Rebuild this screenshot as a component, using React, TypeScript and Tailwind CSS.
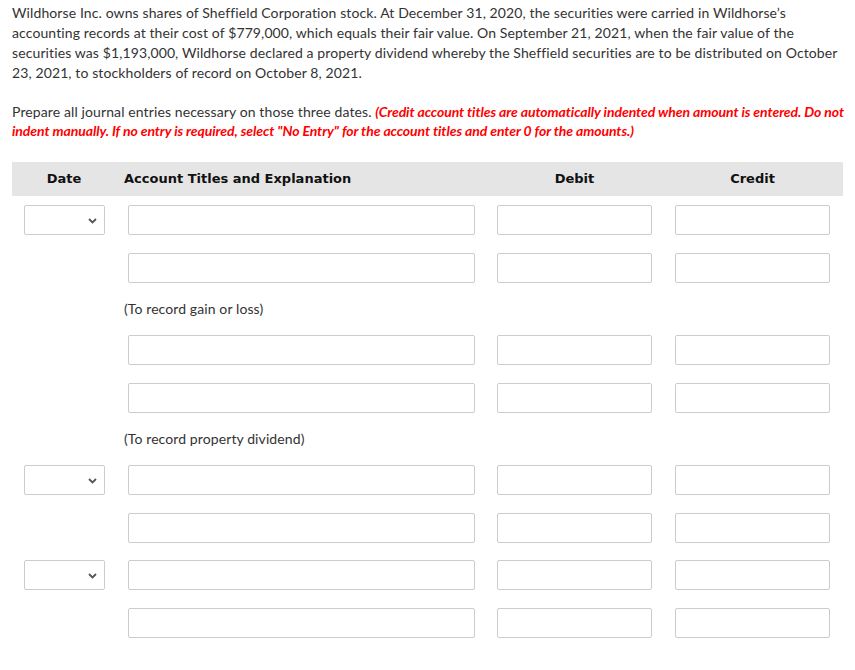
import React from 'react';

const body = "font-['Lato','Liberation_Sans',sans-serif]";
const head = "font-['DejaVu_Sans','Liberation_Sans',sans-serif]";

function Chevron() {
  return (
    <svg width="9" height="6" viewBox="0 0 9 6" className="absolute right-[7px] top-[12px]">
      <path d="M1 1 L4.5 4.5 L8 1" fill="none" stroke="#555" strokeWidth="1.8" />
    </svg>
  );
}

function Box({ className }: { className: string }) {
  return <div className={`h-[30px] border border-[#cccccc] rounded-[2px] bg-white ${className}`} />;
}

function Row({ date, gap = 'mt-[18px]' }: { date?: boolean; gap?: string }) {
  return (
    <div className={`flex ${gap}`}>
      <div className="w-[128px] pl-[24px]">
        {date && (
          <div className="relative w-[81px] h-[30px] border border-[#cccccc] rounded-[2px] bg-white">
            <Chevron />
          </div>
        )}
      </div>
      <Box className="w-[347px]" />
      <Box className="w-[155px] ml-[22px]" />
      <Box className="w-[155px] ml-[23px]" />
    </div>
  );
}

function Note({ text }: { text: string }) {
  return (
    <div className={`${body} text-[14px] leading-[20px] tracking-[0.1px] text-[#333333] pl-[124px] my-[16px]`}>{text}</div>
  );
}

export default function App() {
  return (
    <div className="w-[855px] h-[670px] bg-white overflow-hidden">
      <div className={`${body} text-[14px] leading-[20px] tracking-[0.11px] text-[#333333] pl-[12px] pt-[3px] whitespace-nowrap`}>
        <p>
          Wildhorse Inc. owns shares of Sheffield Corporation stock. At December 31, 2020, the securities were carried in Wildhorse’s
          <br />
          accounting records at their cost of $779,000, which equals their fair value. On September 21, 2021, when the fair value of the
          <br />
          securities was $1,193,000, Wildhorse declared a property dividend whereby the Sheffield securities are to be distributed on October
          <br />
          23, 2021, to stockholders of record on October 8, 2021.
        </p>
        <p className="mt-[19px] leading-[19px]">
          Prepare all journal entries necessary on those three dates.{' '}
          <span className="text-[#ff0000] font-bold italic tracking-[-0.08px]">
            (Credit account titles are automatically indented when amount is entered. Do not
            <br />
            indent manually. If no entry is required, select "No Entry" for the account titles and enter 0 for the amounts.)
          </span>
        </p>
      </div>

      <div className={`${head} mt-[22px] mx-[12px] h-[34px] bg-[#e5e5e5] flex items-center text-[13px] font-bold text-[#111111]`}>
        <div className="w-[104px] text-center">Date</div>
        <div className="pl-[8px] w-[358px]">Account Titles and Explanation</div>
        <div className="ml-[23px] w-[155px] text-center">Debit</div>
        <div className="ml-[23px] w-[155px] text-center">Credit</div>
      </div>

      <div className="mt-[9px]">
        <Row date gap="" />
        <Row />
        <Note text="(To record gain or loss)" />
        <Row gap="" />
        <Row />
        <Note text="(To record property dividend)" />
        <Row date gap="" />
        <Row />
        <Row date gap="mt-[17px]" />
        <Row />
      </div>
    </div>
  );
}
